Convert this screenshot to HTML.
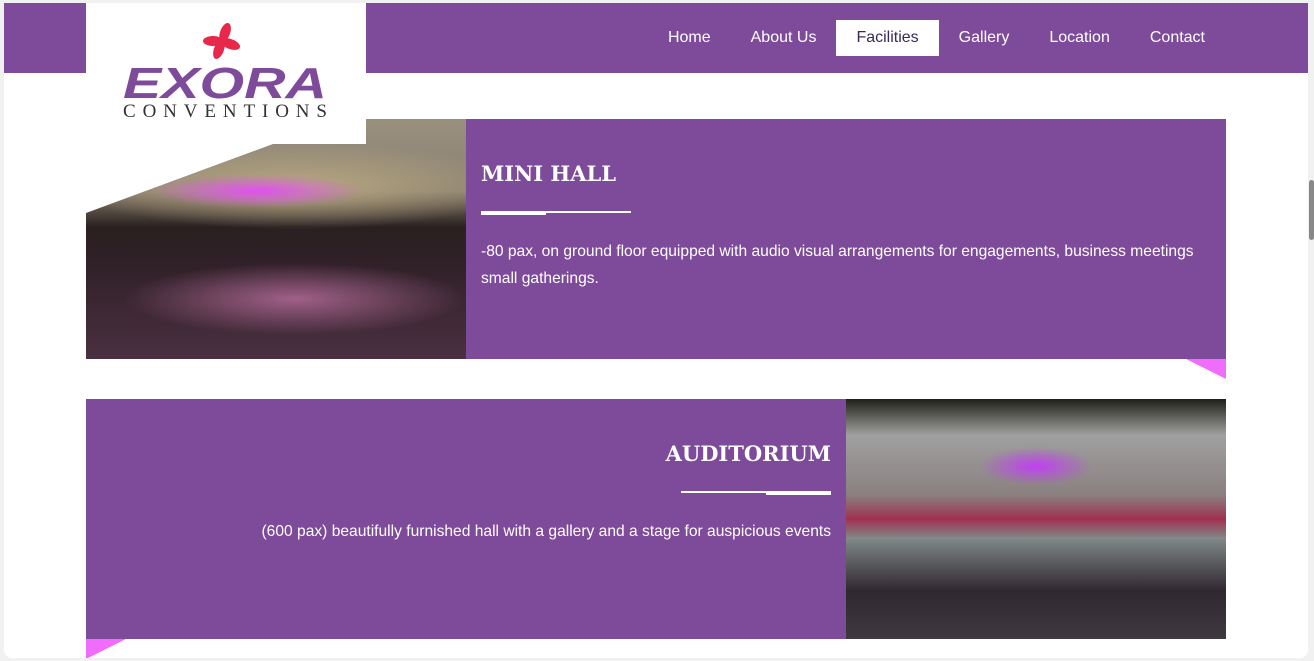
<!DOCTYPE html>
<html><head><style>
*{margin:0;padding:0;box-sizing:border-box}
body{width:1314px;height:661px;background:#f1f1f1;font-family:"Liberation Sans",sans-serif;overflow:hidden;position:relative}
.win{position:absolute;left:4px;top:3px;width:1304px;height:655px;background:#fff;border-radius:0 0 8px 8px;overflow:hidden}
.hdr{position:absolute;left:0;top:0;width:1304px;height:70px;background:#7e4b9b}
.nav{position:absolute;top:17px;right:83px;display:flex}
.nav span{color:#fff;font-size:16px;padding:0 20px;height:36px;line-height:36px}
.nav span.act{background:#fff;color:#3a2a5a}
.logo{position:absolute;left:82px;top:0;width:280px;height:116px;background:#fff}
.card{position:absolute;background:#7e4b9b;color:#fff}
h2{font-family:"DejaVu Serif","Liberation Serif",serif;font-weight:bold;font-size:21px}
p{font-size:15.6px;line-height:27px;font-weight:300}
.tri{position:absolute;width:0;height:0}
</style></head><body>
<div class="win">
<div class="hdr"><div class="nav"><span>Home</span><span>About Us</span><span class="act">Facilities</span><span>Gallery</span><span>Location</span><span>Contact</span></div></div>
<div style="position:absolute;left:82px;top:116px;width:380px;height:240px;clip-path:polygon(0 94px,187px 25px,280px 25px,280px 0,380px 0,380px 240px,0 240px);background:radial-gradient(ellipse 28% 7% at 45% 30%,#e050f0,transparent),radial-gradient(ellipse 60% 18% at 55% 28%,#b8a880,transparent),radial-gradient(ellipse 45% 15% at 55% 75%,#a06088,transparent),linear-gradient(180deg,#9a9080 0%,#8a8070 30%,#2a2020 45%,#302028 60%,#4a3040 100%)"></div>
<div class="logo">
<svg width="280" height="138" viewBox="0 0 280 138">
<g fill="#e8274a" transform="translate(136,38)">
<ellipse cx="0" cy="-9" rx="5" ry="10" transform="rotate(20)"/>
<ellipse cx="0" cy="-9" rx="5" ry="10" transform="rotate(110)"/>
<ellipse cx="0" cy="-9" rx="5" ry="10" transform="rotate(200)"/>
<ellipse cx="0" cy="-9" rx="5" ry="10" transform="rotate(270)"/>
</g>
<text x="37" y="95" textLength="204" lengthAdjust="spacingAndGlyphs" font-family="Liberation Sans" font-style="italic" font-weight="bold" font-size="44" fill="#7e4b9b">EXORA</text>
<text x="37" y="114" textLength="204" lengthAdjust="spacing" font-family="Liberation Serif" font-size="19" fill="#333">CONVENTIONS</text>
</svg></div>

<div class="card" style="left:462px;top:116px;width:760px;height:240px">
<h2 style="position:absolute;left:15px;top:42px">MINI HALL</h2>
<div style="position:absolute;left:15px;top:92px;width:150px;height:2px;background:#fff"></div>
<div style="position:absolute;left:15px;top:92px;width:65px;height:4px;background:#fff"></div>
<p style="position:absolute;left:15px;top:119px;width:735px">-80 pax, on ground floor equipped with audio visual arrangements for engagements, business meetings small gatherings.</p>
</div>
<div class="tri" style="left:1182px;top:356px;border-top:20px solid #f06cfb;border-left:40px solid transparent"></div>

<div class="card" style="left:82px;top:396px;width:760px;height:240px">
<h2 style="position:absolute;right:15px;top:42px">AUDITORIUM</h2>
<div style="position:absolute;right:15px;top:92px;width:150px;height:2px;background:#fff"></div>
<div style="position:absolute;right:15px;top:92px;width:65px;height:4px;background:#fff"></div>
<p style="position:absolute;right:15px;top:119px;width:735px;text-align:right">(600 pax) beautifully furnished hall with a gallery and a stage for auspicious events</p>
</div>
<div style="position:absolute;left:842px;top:396px;width:380px;height:240px;background:radial-gradient(ellipse 15% 8% at 50% 28%,#c040f0,transparent),linear-gradient(180deg,#202018 0%,#a0a0a0 15%,#8a8080 40%,#a03050 50%,#808888 58%,#302830 80%,#403840 100%)"></div>
<div class="tri" style="left:82px;top:636px;border-top:20px solid #f06cfb;border-right:40px solid transparent"></div>
</div>
<div style="position:absolute;left:1309px;top:180px;width:5px;height:60px;background:#888;border-radius:3px"></div>
</body></html>
